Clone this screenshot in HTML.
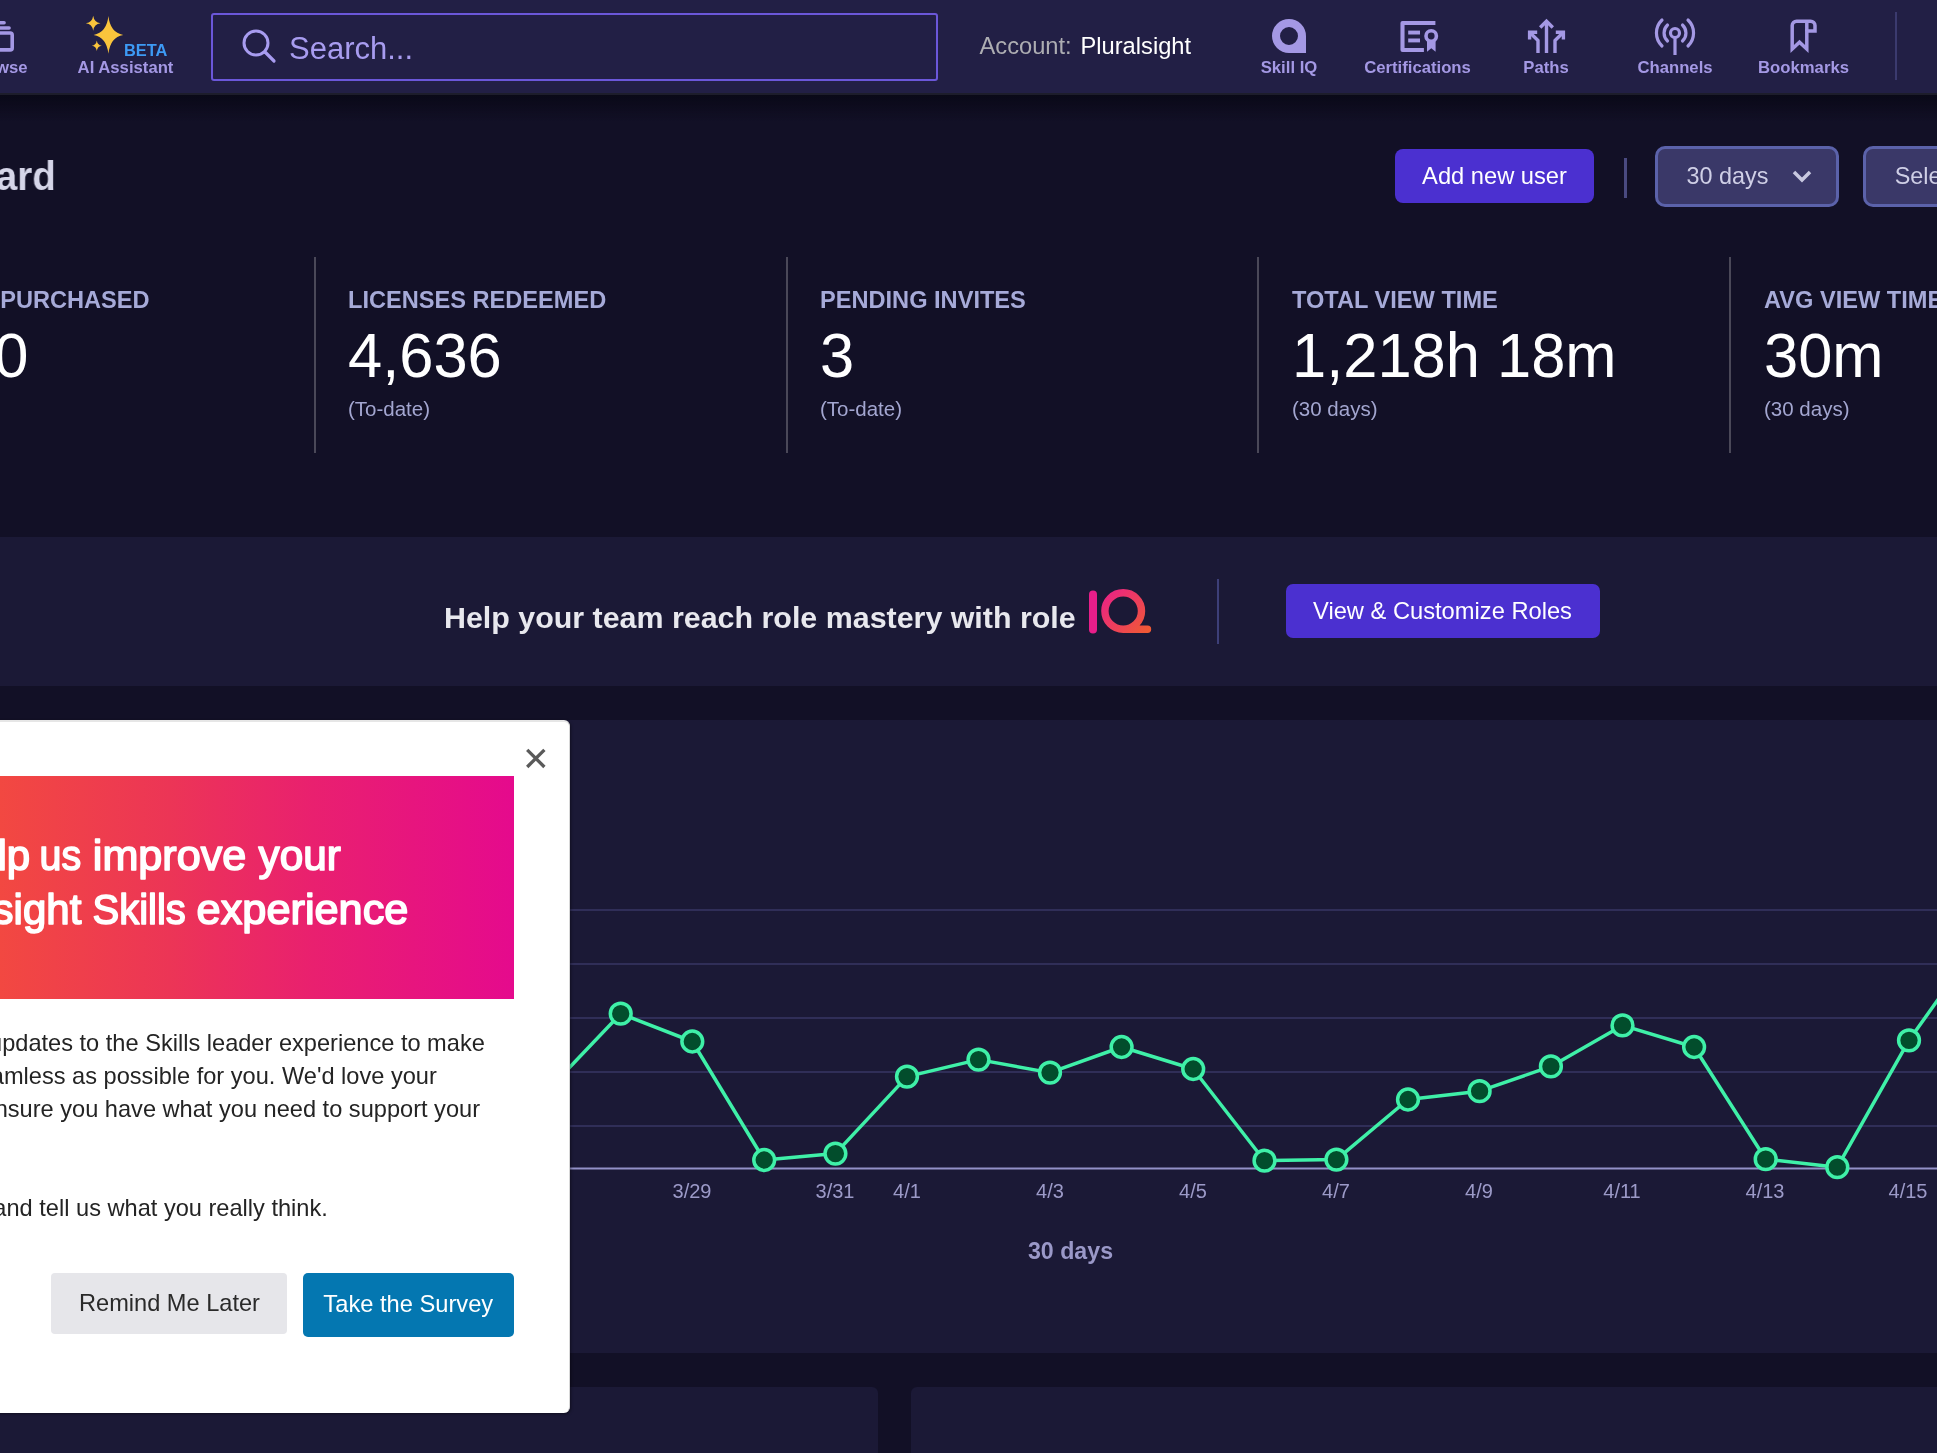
<!DOCTYPE html>
<html><head><meta charset="utf-8">
<style>
*{box-sizing:border-box;margin:0;padding:0}
html,body{width:1937px;height:1453px;overflow:hidden;background:#121026;font-family:"Liberation Sans",sans-serif}
.a{position:absolute;white-space:nowrap;line-height:1}
body{-webkit-font-smoothing:antialiased}
#root{position:absolute;left:0;top:0;width:1937px;height:1453px;overflow:hidden;will-change:transform}
</style></head><body><div id="root">
<div class="a" style="left:0;top:0;width:1937px;height:93px;background:#221f45"></div>
<div class="a" style="left:0;top:93px;width:1937px;height:2px;background:#1d1d2b"></div>
<div class="a" style="left:0;top:95px;width:1937px;height:26px;background:linear-gradient(#0a0918,rgba(18,16,38,0))"></div>
<svg class="a" style="left:0;top:18px" width="20" height="36" viewBox="0 0 20 36">
<path d="M-10 4.8 H4.1 M-10 9.95 H9.1" stroke="#a498e4" stroke-width="3.5" fill="none" stroke-linecap="round"/>
<rect x="-12" y="15" width="24.2" height="16.9" rx="2" stroke="#a498e4" stroke-width="3.6" fill="none"/>
</svg>
<div class="a" style="right:1909.5px;top:59.9px;font-size:16.7px;color:#a498e4;font-weight:bold;">Browse</div>
<svg class="a" style="left:80px;top:10px" width="50" height="50" viewBox="0 0 50 50"><path fill="#fac43c" d="M28.4 6.0 Q30.176 22.631999999999998 43.2 24.9 Q30.176 27.168 28.4 43.8 Q26.624 27.168 13.599999999999998 24.9 Q26.624 22.631999999999998 28.4 6.0 Z"/><path fill="#fac43c" d="M13.2 5.800000000000001 Q14.075999999999999 12.4 20.5 13.3 Q14.075999999999999 14.200000000000001 13.2 20.8 Q12.324 14.200000000000001 5.8999999999999995 13.3 Q12.324 12.4 13.2 5.800000000000001 Z"/><path fill="#fac43c" d="M16.8 30.500000000000004 Q17.400000000000002 35.076 21.8 35.7 Q17.400000000000002 36.324000000000005 16.8 40.900000000000006 Q16.2 36.324000000000005 11.8 35.7 Q16.2 35.076 16.8 30.500000000000004 Z"/></svg>
<div class="a" style="left:124.0px;top:41.8px;font-size:16.4px;color:#3d9af5;font-weight:bold;">BETA</div>
<div class="a" style="left:125.5px;top:59.8px;font-size:16.7px;color:#a498e4;font-weight:bold;transform:translateX(-50%);">AI Assistant</div>
<div class="a" style="left:210.5px;top:12.7px;width:727.5px;height:68.3px;border:2px solid #6b57d9;border-radius:3px"></div>
<svg class="a" style="left:238px;top:26px" width="42" height="42" viewBox="0 0 42 42">
<circle cx="18" cy="17" r="12" stroke="#a89cf0" stroke-width="3" fill="none"/>
<path d="M27 26 L36 35" stroke="#a89cf0" stroke-width="3.2" stroke-linecap="round"/>
</svg>
<div class="a" style="left:289.0px;top:32.9px;font-size:31px;color:#a89cf0;">Search...</div>
<div class="a" style="left:979.5px;top:34.6px;font-size:23.7px;color:#adadb2;">Account:</div>
<div class="a" style="left:1080.5px;top:34.6px;font-size:23.7px;color:#ffffff;">Pluralsight</div>
<svg class="a" style="left:1270px;top:17px" width="40" height="40" viewBox="0 0 40 40">
<path fill-rule="evenodd" fill="#a498e4" d="M19 2 A17 17 0 0 0 2 19 A17 17 0 0 0 19 36 H36 V19 A17 17 0 0 0 19 2 Z M19 10 A9 9 0 1 1 19 28 A9 9 0 1 1 19 10 Z"/>
</svg>
<div class="a" style="left:1289.0px;top:59.8px;font-size:16.7px;color:#a498e4;font-weight:bold;transform:translateX(-50%);">Skill IQ</div>
<svg class="a" style="left:1398px;top:18px" width="44" height="38" viewBox="0 0 44 38">
<path d="M37.4 5 H4.5 V32 H25.9" stroke="#a498e4" stroke-width="4.1" fill="none" stroke-linejoin="round"/>
<rect x="10.2" y="12.6" width="11.8" height="3.9" fill="#a498e4"/>
<rect x="10.2" y="20.5" width="11.8" height="3.9" fill="#a498e4"/>
<circle cx="33.2" cy="18" r="5.2" stroke="#a498e4" stroke-width="3.6" fill="none"/>
<path d="M29 22 H37.6 V33.8 L33.3 30.3 L29 33.8 Z" fill="#a498e4"/>
</svg>
<div class="a" style="left:1417.5px;top:59.8px;font-size:16.7px;color:#a498e4;font-weight:bold;transform:translateX(-50%);">Certifications</div>
<svg class="a" style="left:1524px;top:17px" width="44" height="38" viewBox="0 0 44 38">
<path d="M22.5 36 V4" stroke="#a498e4" stroke-width="3.4" fill="none"/>
<path d="M16.2 10.5 L22.5 4.2 L28.8 10.5" stroke="#a498e4" stroke-width="3.4" fill="none"/>
<path d="M14 36 V23.5 L5.8 15.5" stroke="#a498e4" stroke-width="3.4" fill="none" stroke-linejoin="round"/>
<path d="M5.6 22.5 V15.3 H13.2" stroke="#a498e4" stroke-width="3.4" fill="none"/>
<path d="M31 36 V23.5 L39.2 15.5" stroke="#a498e4" stroke-width="3.4" fill="none" stroke-linejoin="round"/>
<path d="M39.4 22.5 V15.3 H31.8" stroke="#a498e4" stroke-width="3.4" fill="none"/>
</svg>
<div class="a" style="left:1546.0px;top:59.8px;font-size:16.7px;color:#a498e4;font-weight:bold;transform:translateX(-50%);">Paths</div>
<svg class="a" style="left:1653px;top:16px" width="44" height="40" viewBox="0 0 44 40">
<circle cx="22" cy="17" r="4.5" stroke="#a498e4" stroke-width="3.2" fill="none"/>
<path d="M22 22 V39" stroke="#a498e4" stroke-width="3.2"/>
<path d="M14.5 25 A11 11 0 0 1 14.5 9 M29.5 9 A11 11 0 0 1 29.5 25" stroke="#a498e4" stroke-width="3.2" fill="none" stroke-linecap="round"/>
<path d="M9 30 A18 18 0 0 1 9 4 M35 4 A18 18 0 0 1 35 30" stroke="#a498e4" stroke-width="3.2" fill="none" stroke-linecap="round"/>
</svg>
<div class="a" style="left:1675.0px;top:59.8px;font-size:16.7px;color:#a498e4;font-weight:bold;transform:translateX(-50%);">Channels</div>
<svg class="a" style="left:1786px;top:16px" width="36" height="42" viewBox="0 0 36 42">
<path d="M6.2 33 V9.6 A4.4 4.4 0 0 1 10.6 5.2 H24.6 A4.4 4.4 0 0 1 29 9.6 V15.1 H20.8 V33 L13.5 26.2 L6.2 33 Z" stroke="#a498e4" stroke-width="3.5" fill="none" stroke-linejoin="miter" stroke-miterlimit="10"/>
<path d="M20.8 15.1 V5.2" stroke="#a498e4" stroke-width="3.5"/>
</svg>
<div class="a" style="left:1803.5px;top:59.8px;font-size:16.7px;color:#a498e4;font-weight:bold;transform:translateX(-50%);">Bookmarks</div>
<div class="a" style="left:1895px;top:12px;width:2px;height:68px;background:#3b3a6e"></div>
<div class="a" style="right:1881.5px;top:155.4px;font-size:41.5px;color:#d5d5e8;font-weight:bold;transform:scaleX(0.93);transform-origin:right center;">Dashboard</div>
<div class="a" style="left:1395px;top:149px;width:199px;height:54px;background:#4b30d0;border-radius:8px"></div>
<div class="a" style="left:1494.5px;top:164.7px;font-size:23.7px;color:#ffffff;transform:translateX(-50%);">Add new user</div>
<div class="a" style="left:1624px;top:158px;width:3px;height:40px;background:#4a4a80"></div>
<div class="a" style="left:1655px;top:146px;width:184px;height:61px;background:#3a3868;border:3px solid #5b62aa;border-radius:10px"></div>
<div class="a" style="left:1686.5px;top:164.5px;font-size:23.4px;color:#cfcfe6;">30 days</div>
<svg class="a" style="left:1790px;top:167px" width="24" height="20" viewBox="0 0 24 20">
<path d="M4 5 L12 13 L20 5" stroke="#c8c8e0" stroke-width="3.5" fill="none"/>
</svg>
<div class="a" style="left:1863px;top:146px;width:184px;height:61px;background:#3a3868;border:3px solid #5b62aa;border-radius:10px"></div>
<div class="a" style="left:1894.7px;top:164.5px;font-size:23.4px;color:#cfcfe6;">Select</div>
<div class="a" style="left:314px;top:257px;width:2px;height:196px;background:#4a4858"></div>
<div class="a" style="left:785.5px;top:257px;width:2px;height:196px;background:#4a4858"></div>
<div class="a" style="left:1257px;top:257px;width:2px;height:196px;background:#4a4858"></div>
<div class="a" style="left:1729px;top:257px;width:2px;height:196px;background:#4a4858"></div>
<div class="a" style="right:1787.4px;top:289.0px;font-size:23.6px;color:#a6aad8;font-weight:bold;">PURCHASED</div>
<div class="a" style="right:1909.0px;top:323.7px;font-size:62.5px;color:#ffffff;transform:scaleX(0.983);transform-origin:right center;">5,000</div>
<div class="a" style="left:348.0px;top:289.0px;font-size:23.6px;color:#a6aad8;font-weight:bold;">LICENSES REDEEMED</div>
<div class="a" style="left:347.5px;top:323.7px;font-size:62.5px;color:#ffffff;transform:scaleX(0.983);transform-origin:left center;">4,636</div>
<div class="a" style="left:348.0px;top:398.6px;font-size:20.5px;color:#a3a6d0;">(To-date)</div>
<div class="a" style="left:820.0px;top:289.0px;font-size:23.6px;color:#a6aad8;font-weight:bold;">PENDING INVITES</div>
<div class="a" style="left:819.5px;top:323.7px;font-size:62.5px;color:#ffffff;transform:scaleX(0.983);transform-origin:left center;">3</div>
<div class="a" style="left:820.0px;top:398.6px;font-size:20.5px;color:#a3a6d0;">(To-date)</div>
<div class="a" style="left:1292.0px;top:289.0px;font-size:23.6px;color:#a6aad8;font-weight:bold;">TOTAL VIEW TIME</div>
<div class="a" style="left:1291.5px;top:323.7px;font-size:62.5px;color:#ffffff;transform:scaleX(0.983);transform-origin:left center;">1,218h 18m</div>
<div class="a" style="left:1292.0px;top:398.6px;font-size:20.5px;color:#a3a6d0;">(30 days)</div>
<div class="a" style="left:1764.0px;top:289.0px;font-size:23.6px;color:#a6aad8;font-weight:bold;">AVG VIEW TIME</div>
<div class="a" style="left:1763.5px;top:323.7px;font-size:62.5px;color:#ffffff;transform:scaleX(0.983);transform-origin:left center;">30m</div>
<div class="a" style="left:1764.0px;top:398.6px;font-size:20.5px;color:#a3a6d0;">(30 days)</div>
<div class="a" style="left:0;top:537px;width:1937px;height:149px;background:#1b1936"></div>
<div class="a" style="left:444.0px;top:601.9px;font-size:30.4px;color:#e8e8ee;font-weight:bold;">Help your team reach role mastery with role</div>
<svg class="a" style="left:1084px;top:584px" width="72" height="56" viewBox="0 0 72 56">
<defs><linearGradient id="iqg" gradientUnits="userSpaceOnUse" x1="17" y1="5" x2="64" y2="48"><stop offset="0" stop-color="#e91e8c"/><stop offset="1" stop-color="#f05a33"/></linearGradient></defs>
<path d="M9 10.4 V45.5" stroke="#e91e8a" stroke-width="8" stroke-linecap="round"/>
<path d="M39.2 45.3 A18.3 18.3 0 1 1 57.5 27 A18.3 18.3 0 0 1 39.2 45.3 H63.5" stroke="url(#iqg)" stroke-width="7.4" fill="none" stroke-linecap="round"/>
</svg>
<div class="a" style="left:1217px;top:579px;width:2px;height:65px;background:#3d3f78"></div>
<div class="a" style="left:1286px;top:584px;width:314px;height:54px;background:#4b30d0;border-radius:7px"></div>
<div class="a" style="left:1442.5px;top:599.9px;font-size:23.7px;color:#ffffff;transform:translateX(-50%);">View &amp; Customize Roles</div>
<div class="a" style="left:-10px;top:720px;width:1957px;height:633px;background:#1b1936;border-radius:6px"></div>
<div class="a" style="left:-10px;top:1387px;width:888px;height:100px;background:#1b1936;border-radius:6px"></div>
<div class="a" style="left:911px;top:1387px;width:1040px;height:100px;background:#1b1936;border-radius:6px"></div>
<svg class="a" style="left:0;top:0" width="1937" height="1453" viewBox="0 0 1937 1453"><rect x="0" y="909" width="1937" height="2" fill="#302e58"/><rect x="0" y="963" width="1937" height="2" fill="#302e58"/><rect x="0" y="1017" width="1937" height="2" fill="#302e58"/><rect x="0" y="1071" width="1937" height="2" fill="#302e58"/><rect x="0" y="1125" width="1937" height="2" fill="#302e58"/><rect x="0" y="1167.5" width="1937" height="2" fill="#9391c8"/><path d="M549.0 1089.0 L620.7 1013.7 L692.3 1041.5 L764.2 1160.0 L835.4 1153.6 L907.0 1076.6 L978.5 1059.6 L1050.0 1072.6 L1121.6 1047.0 L1193.2 1069.0 L1264.5 1160.7 L1336.4 1159.6 L1408.0 1099.5 L1479.6 1091.2 L1550.9 1066.4 L1622.5 1025.4 L1694.1 1047.0 L1765.7 1159.2 L1837.3 1167.2 L1909.0 1040.3 L1980.0 940.6" stroke="#3ff0a8" stroke-width="3.5" fill="none" stroke-linejoin="round"/><circle cx="549.0" cy="1089.0" r="10.4" fill="#024d2c" stroke="#3ff0a8" stroke-width="3.5"/><circle cx="620.7" cy="1013.7" r="10.4" fill="#024d2c" stroke="#3ff0a8" stroke-width="3.5"/><circle cx="692.3" cy="1041.5" r="10.4" fill="#024d2c" stroke="#3ff0a8" stroke-width="3.5"/><circle cx="764.2" cy="1160.0" r="10.4" fill="#024d2c" stroke="#3ff0a8" stroke-width="3.5"/><circle cx="835.4" cy="1153.6" r="10.4" fill="#024d2c" stroke="#3ff0a8" stroke-width="3.5"/><circle cx="907.0" cy="1076.6" r="10.4" fill="#024d2c" stroke="#3ff0a8" stroke-width="3.5"/><circle cx="978.5" cy="1059.6" r="10.4" fill="#024d2c" stroke="#3ff0a8" stroke-width="3.5"/><circle cx="1050.0" cy="1072.6" r="10.4" fill="#024d2c" stroke="#3ff0a8" stroke-width="3.5"/><circle cx="1121.6" cy="1047.0" r="10.4" fill="#024d2c" stroke="#3ff0a8" stroke-width="3.5"/><circle cx="1193.2" cy="1069.0" r="10.4" fill="#024d2c" stroke="#3ff0a8" stroke-width="3.5"/><circle cx="1264.5" cy="1160.7" r="10.4" fill="#024d2c" stroke="#3ff0a8" stroke-width="3.5"/><circle cx="1336.4" cy="1159.6" r="10.4" fill="#024d2c" stroke="#3ff0a8" stroke-width="3.5"/><circle cx="1408.0" cy="1099.5" r="10.4" fill="#024d2c" stroke="#3ff0a8" stroke-width="3.5"/><circle cx="1479.6" cy="1091.2" r="10.4" fill="#024d2c" stroke="#3ff0a8" stroke-width="3.5"/><circle cx="1550.9" cy="1066.4" r="10.4" fill="#024d2c" stroke="#3ff0a8" stroke-width="3.5"/><circle cx="1622.5" cy="1025.4" r="10.4" fill="#024d2c" stroke="#3ff0a8" stroke-width="3.5"/><circle cx="1694.1" cy="1047.0" r="10.4" fill="#024d2c" stroke="#3ff0a8" stroke-width="3.5"/><circle cx="1765.7" cy="1159.2" r="10.4" fill="#024d2c" stroke="#3ff0a8" stroke-width="3.5"/><circle cx="1837.3" cy="1167.2" r="10.4" fill="#024d2c" stroke="#3ff0a8" stroke-width="3.5"/><circle cx="1909.0" cy="1040.3" r="10.4" fill="#024d2c" stroke="#3ff0a8" stroke-width="3.5"/><circle cx="1980.0" cy="940.6" r="10.4" fill="#024d2c" stroke="#3ff0a8" stroke-width="3.5"/></svg>
<div class="a" style="left:692.0px;top:1181.3px;font-size:20px;color:#9c9ac8;transform:translateX(-50%);">3/29</div>
<div class="a" style="left:835.0px;top:1181.3px;font-size:20px;color:#9c9ac8;transform:translateX(-50%);">3/31</div>
<div class="a" style="left:907.0px;top:1181.3px;font-size:20px;color:#9c9ac8;transform:translateX(-50%);">4/1</div>
<div class="a" style="left:1050.0px;top:1181.3px;font-size:20px;color:#9c9ac8;transform:translateX(-50%);">4/3</div>
<div class="a" style="left:1193.0px;top:1181.3px;font-size:20px;color:#9c9ac8;transform:translateX(-50%);">4/5</div>
<div class="a" style="left:1336.0px;top:1181.3px;font-size:20px;color:#9c9ac8;transform:translateX(-50%);">4/7</div>
<div class="a" style="left:1479.0px;top:1181.3px;font-size:20px;color:#9c9ac8;transform:translateX(-50%);">4/9</div>
<div class="a" style="left:1622.0px;top:1181.3px;font-size:20px;color:#9c9ac8;transform:translateX(-50%);">4/11</div>
<div class="a" style="left:1765.0px;top:1181.3px;font-size:20px;color:#9c9ac8;transform:translateX(-50%);">4/13</div>
<div class="a" style="left:1908.0px;top:1181.3px;font-size:20px;color:#9c9ac8;transform:translateX(-50%);">4/15</div>
<div class="a" style="left:1070.5px;top:1239.9px;font-size:23.2px;color:#9a98c8;font-weight:bold;transform:translateX(-50%);">30 days</div>
<div class="a" style="left:-20px;top:719.5px;width:589.5px;height:693px;background:#fff;border-radius:6px;border-top:2.5px solid #e6e6e6;border-right:1.5px solid #d8d8d8;box-shadow:1px 1px 3px rgba(0,0,0,.4)"></div>
<svg class="a" style="left:520px;top:743px" width="32" height="32" viewBox="0 0 32 32">
<path d="M7.2 6.8 L24.4 24 M24.4 6.8 L7.2 24" stroke="#5a5a5a" stroke-width="3.3"/>
</svg>
<div class="a" style="left:-60px;top:776px;width:573.6px;height:223px;background:linear-gradient(90deg,#f44f3a 0%,#ec3556 40%,#e9206f 65%,#e50a8d 100%)"></div>
<svg class="a" style="left:0;top:776px" width="514" height="223" viewBox="0 776 514 223"><text x="30.2" y="869.8" text-anchor="end" font-family="Liberation Sans" font-size="42" fill="#fff" stroke="#fff" stroke-width="1.6" stroke-linejoin="round">Help</text><text x="39.5" y="869.8" textLength="41.6" lengthAdjust="spacingAndGlyphs" font-family="Liberation Sans" font-size="42" fill="#fff" stroke="#fff" stroke-width="1.6" stroke-linejoin="round">us</text><text x="92.8" y="869.8" textLength="153.5" lengthAdjust="spacingAndGlyphs" font-family="Liberation Sans" font-size="42" fill="#fff" stroke="#fff" stroke-width="1.6" stroke-linejoin="round">improve</text><text x="258.6" y="869.8" textLength="82.2" lengthAdjust="spacingAndGlyphs" font-family="Liberation Sans" font-size="42" fill="#fff" stroke="#fff" stroke-width="1.6" stroke-linejoin="round">your</text><text x="81.3" y="924.4" text-anchor="end" font-family="Liberation Sans" font-size="42" fill="#fff" stroke="#fff" stroke-width="1.6" stroke-linejoin="round">Pluralsight</text><text x="92.5" y="924.4" textLength="93.3" lengthAdjust="spacingAndGlyphs" font-family="Liberation Sans" font-size="42" fill="#fff" stroke="#fff" stroke-width="1.6" stroke-linejoin="round">Skills</text><text x="196.6" y="924.4" textLength="211.8" lengthAdjust="spacingAndGlyphs" font-family="Liberation Sans" font-size="42" fill="#fff" stroke="#fff" stroke-width="1.6" stroke-linejoin="round">experience</text></svg>
<div class="a" style="right:1452.2px;top:1031.5px;font-size:23.6px;color:#242424;">We're making updates to the Skills leader experience to make</div>
<div class="a" style="right:1500.2px;top:1064.5px;font-size:23.6px;color:#242424;">it as seamless as possible for you. We'd love your</div>
<div class="a" style="right:1457.0px;top:1097.5px;font-size:23.6px;color:#242424;">feedback to ensure you have what you need to support your</div>
<div class="a" style="right:1609.2px;top:1197.2px;font-size:23.6px;color:#242424;">Take our survey and tell us what you really think.</div>
<div class="a" style="left:51px;top:1273px;width:236px;height:61px;background:#e6e6ea;border-radius:4px"></div>
<div class="a" style="left:169.5px;top:1292.0px;font-size:23.6px;color:#2a2a2a;transform:translateX(-50%);">Remind Me Later</div>
<div class="a" style="left:303px;top:1273px;width:211px;height:64px;background:#0477b1;border-radius:5px"></div>
<div class="a" style="left:408.3px;top:1292.6px;font-size:23.7px;color:#ffffff;transform:translateX(-50%);">Take the Survey</div>
</div></body></html>
